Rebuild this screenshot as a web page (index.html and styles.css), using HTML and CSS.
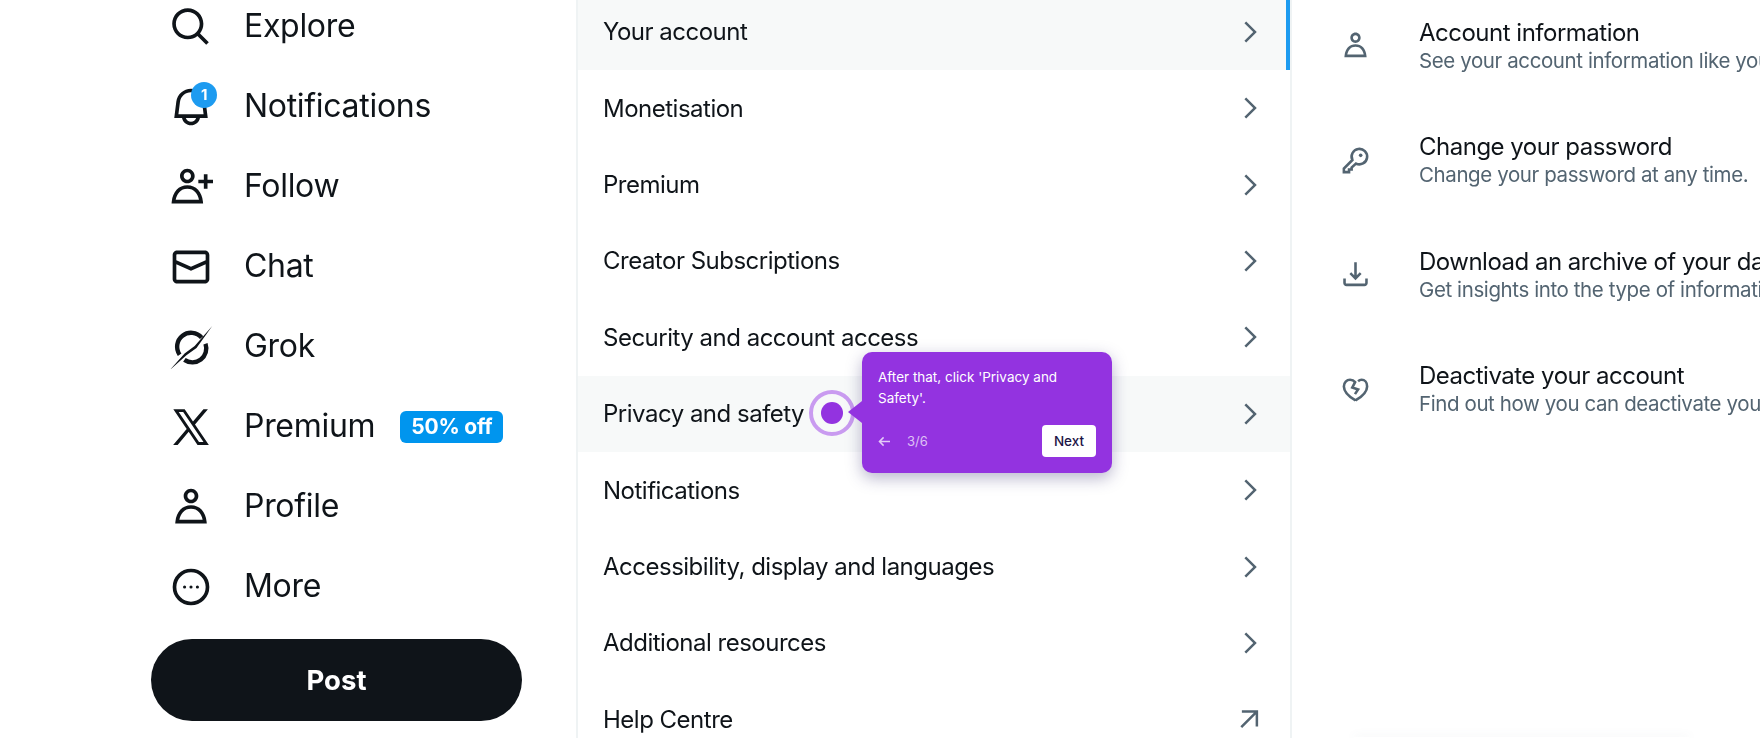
FILE: index.html
```html
<!DOCTYPE html>
<html lang="en">
<head>
  <meta charset="UTF-8">
  <title>Settings</title>
  <link rel="stylesheet" href="styles.css">
</head>
<body>
  <div class="page">
    <nav class="sidebar">
      <a class="nav-item">
        <svg class="nav-icon" viewBox="0 0 24 24"><path d="M10.25 3.75c-3.59 0-6.5 2.91-6.5 6.5s2.91 6.5 6.5 6.5c1.795 0 3.419-.726 4.596-1.904 1.178-1.177 1.904-2.801 1.904-4.596 0-3.59-2.91-6.5-6.5-6.5zm-8.5 6.5c0-4.694 3.806-8.5 8.5-8.5s8.5 3.806 8.5 8.5c0 1.986-.682 3.815-1.824 5.262l4.781 4.781-1.414 1.414-4.781-4.781c-1.447 1.142-3.276 1.824-5.262 1.824-4.694 0-8.5-3.806-8.5-8.5z"/></svg>
        <span class="nav-label">Explore</span>
      </a>
      <a class="nav-item">
        <span class="icon-wrap">
          <svg class="nav-icon" viewBox="0 0 24 24"><path d="M19.993 9.042C19.48 5.017 16.054 2 11.996 2s-7.49 3.021-7.999 7.051L2.866 18H7.1c.463 2.282 2.481 4 4.9 4s4.437-1.718 4.9-4h4.236l-1.143-8.958zM12 20c-1.306 0-2.417-.835-2.829-2h5.658c-.412 1.165-1.523 2-2.829 2zm-6.866-4l.847-6.698C6.364 6.272 8.941 4 11.996 4s5.627 2.268 6.013 5.295L18.864 16H5.134z"/></svg>
          <span class="count">1</span>
        </span>
        <span class="nav-label">Notifications</span>
      </a>
      <a class="nav-item">
        <svg class="nav-icon" viewBox="0 0 24 24"><path d="M10 4c-1.105 0-2 .9-2 2s.895 2 2 2 2-.9 2-2-.895-2-2-2zM6 6c0-2.21 1.791-4 4-4s4 1.79 4 4-1.791 4-4 4-4-1.79-4-4zm13 4v3h2v-3h3V8h-3V5h-2v3h-3v2h3zM3.651 19h12.698c-.337-1.8-1.023-3.21-1.945-4.19C13.318 13.65 11.838 13 10 13s-3.317.65-4.404 1.81c-.922.98-1.608 2.39-1.945 4.19zm.486-5.56C5.627 11.85 7.648 11 10 11s4.373.85 5.863 2.44c1.477 1.58 2.366 3.8 2.632 6.46l.11 1.1H1.395l.11-1.1c.266-2.66 1.155-4.88 2.632-6.46z"/></svg>
        <span class="nav-label">Follow</span>
      </a>
      <a class="nav-item">
        <svg class="nav-icon" viewBox="0 0 24 24"><path d="M1.998 5.5c0-1.381 1.119-2.5 2.5-2.5h15c1.381 0 2.5 1.119 2.5 2.5v13c0 1.381-1.119 2.5-2.5 2.5h-15c-1.381 0-2.5-1.119-2.5-2.5v-13zm2.5-.5c-.276 0-.5.224-.5.5v2.764l8 3.638 8-3.636V5.5c0-.276-.224-.5-.5-.5h-15zm15.5 5.463l-8 3.636-8-3.638V18.5c0 .276.224.5.5.5h15c.276 0 .5-.224.5-.5v-8.037z"/></svg>
        <span class="nav-label">Chat</span>
      </a>
      <a class="nav-item">
        <svg class="nav-icon" viewBox="0 0 24 24">
          <path class="line grok-ring" d="M5.8 16.2A7.6 7.6 0 0 1 17.8 6.9M19.9 10.2A7.6 7.6 0 0 1 8.4 19"/>
          <path d="M23.6.6 14 11.5 8.5 15.5.5 24.5 9.5 16.5 15 12.5z"/>
        </svg>
        <span class="nav-label">Grok</span>
      </a>
      <a class="nav-item">
        <svg class="nav-icon" viewBox="0 0 24 24"><path d="M21.742 21.75l-7.563-11.179 7.056-8.321h-2.456l-5.691 6.714-4.54-6.714H2.359l7.29 10.776L2.25 21.75h2.456l6.035-7.118 4.818 7.118h6.191-.008zM7.739 3.818L18.81 20.182h-2.447L5.29 3.818h2.447z"/></svg>
        <span class="nav-label">Premium</span>
        <span class="offer">50% off</span>
      </a>
      <a class="nav-item">
        <svg class="nav-icon" viewBox="0 0 24 24"><path d="M5.651 19h12.698c-.337-1.8-1.023-3.21-1.945-4.19C15.318 13.65 13.838 13 12 13s-3.317.65-4.404 1.81c-.922.98-1.608 2.39-1.945 4.19zm.486-5.56C7.627 11.85 9.648 11 12 11s4.373.85 5.863 2.44c1.477 1.58 2.366 3.8 2.632 6.46l.11 1.1H3.395l.11-1.1c.266-2.66 1.155-4.88 2.632-6.46zM12 4c-1.105 0-2 .9-2 2s.895 2 2 2 2-.9 2-2-.895-2-2-2zM8 6c0-2.21 1.791-4 4-4s4 1.79 4 4-1.791 4-4 4-4-1.79-4-4z"/></svg>
        <span class="nav-label">Profile</span>
      </a>
      <a class="nav-item">
        <svg class="nav-icon" viewBox="0 0 24 24">
          <circle class="line" cx="12" cy="12" r="9"/>
          <circle cx="8.5" cy="12" r=".85"/><circle cx="12" cy="12" r=".85"/><circle cx="15.5" cy="12" r=".85"/>
        </svg>
        <span class="nav-label">More</span>
      </a>
      <button class="post">Post</button>
    </nav>

    <section class="menu">
      <div class="menu-row current">
        <span>Your account</span>
        <svg class="chevron" viewBox="0 0 24 24"><path d="M14.586 12L7.543 4.96l1.414-1.42L17.414 12l-8.457 8.46-1.414-1.42L14.586 12z"/></svg>
      </div>
      <div class="menu-row">
        <span>Monetisation</span>
        <svg class="chevron" viewBox="0 0 24 24"><path d="M14.586 12L7.543 4.96l1.414-1.42L17.414 12l-8.457 8.46-1.414-1.42L14.586 12z"/></svg>
      </div>
      <div class="menu-row">
        <span>Premium</span>
        <svg class="chevron" viewBox="0 0 24 24"><path d="M14.586 12L7.543 4.96l1.414-1.42L17.414 12l-8.457 8.46-1.414-1.42L14.586 12z"/></svg>
      </div>
      <div class="menu-row">
        <span>Creator Subscriptions</span>
        <svg class="chevron" viewBox="0 0 24 24"><path d="M14.586 12L7.543 4.96l1.414-1.42L17.414 12l-8.457 8.46-1.414-1.42L14.586 12z"/></svg>
      </div>
      <div class="menu-row">
        <span>Security and account access</span>
        <svg class="chevron" viewBox="0 0 24 24"><path d="M14.586 12L7.543 4.96l1.414-1.42L17.414 12l-8.457 8.46-1.414-1.42L14.586 12z"/></svg>
      </div>
      <div class="menu-row hover">
        <span>Privacy and safety</span>
        <svg class="chevron" viewBox="0 0 24 24"><path d="M14.586 12L7.543 4.96l1.414-1.42L17.414 12l-8.457 8.46-1.414-1.42L14.586 12z"/></svg>
      </div>
      <div class="menu-row">
        <span>Notifications</span>
        <svg class="chevron" viewBox="0 0 24 24"><path d="M14.586 12L7.543 4.96l1.414-1.42L17.414 12l-8.457 8.46-1.414-1.42L14.586 12z"/></svg>
      </div>
      <div class="menu-row">
        <span>Accessibility, display and languages</span>
        <svg class="chevron" viewBox="0 0 24 24"><path d="M14.586 12L7.543 4.96l1.414-1.42L17.414 12l-8.457 8.46-1.414-1.42L14.586 12z"/></svg>
      </div>
      <div class="menu-row">
        <span>Additional resources</span>
        <svg class="chevron" viewBox="0 0 24 24"><path d="M14.586 12L7.543 4.96l1.414-1.42L17.414 12l-8.457 8.46-1.414-1.42L14.586 12z"/></svg>
      </div>
      <div class="menu-row">
        <span>Help Centre</span>
        <svg class="chevron" viewBox="0 0 24 24"><path d="M18.5 5H5.5v2h9.6L4.3 17.8l1.4 1.4L16.5 8.4V18h2z"/></svg>
      </div>
    </section>

    <section class="detail">
      <div class="detail-row">
        <svg class="detail-icon" viewBox="0 0 24 24"><path d="M5.651 19h12.698c-.337-1.8-1.023-3.21-1.945-4.19C15.318 13.65 13.838 13 12 13s-3.317.65-4.404 1.81c-.922.98-1.608 2.39-1.945 4.19zm.486-5.56C7.627 11.85 9.648 11 12 11s4.373.85 5.863 2.44c1.477 1.58 2.366 3.8 2.632 6.46l.11 1.1H3.395l.11-1.1c.266-2.66 1.155-4.88 2.632-6.46zM12 4c-1.105 0-2 .9-2 2s.895 2 2 2 2-.9 2-2-.895-2-2-2zM8 6c0-2.21 1.791-4 4-4s4 1.79 4 4-1.791 4-4 4-4-1.79-4-4z"/></svg>
        <div class="detail-text">
          <h3>Account information</h3>
          <p>See your account information like your phone number and email address.</p>
        </div>
      </div>
      <div class="detail-row">
        <svg class="detail-icon" viewBox="0 0 24 24">
          <path class="line" d="M9.6 11.6 3 18.2V21h4v-2h2v-1.6l3.4-3A6 6 0 1 0 9.6 11.6z"/>
          <circle cx="16" cy="8" r="1.4"/>
        </svg>
        <div class="detail-text">
          <h3>Change your password</h3>
          <p>Change your password at any time.</p>
        </div>
      </div>
      <div class="detail-row">
        <svg class="detail-icon" viewBox="0 0 24 24"><path d="M12 16.414l-4.707-4.707 1.414-1.414L11 12.586V2.5h2v10.086l2.293-2.293 1.414 1.414L12 16.414zM21.5 15l-.017 3.5c-.005 1.38-1.128 2.5-2.5 2.5H5c-1.38 0-2.5-1.12-2.5-2.5V15h2v3.5c0 .28.224.5.5.5h14c.277 0 .5-.22.5-.5l.017-3.5h2z"/></svg>
        <div class="detail-text">
          <h3>Download an archive of your data</h3>
          <p>Get insights into the type of information stored for your account.</p>
        </div>
      </div>
      <div class="detail-row">
        <svg class="detail-icon" viewBox="0 0 24 24"><path class="line" d="M12 20.5C7 17.5 3 14 3 9.6 3 6.6 5.2 4.5 7.8 4.5c1.6 0 3 .7 3.9 1.8L9.5 10.5l4.5 1.5-2.4 3.6M14 5.6c.8-.7 1.7-1.1 2.7-1.1 2.5 0 4.3 2.1 4.3 5.1 0 4.4-4 7.9-9 10.9"/></svg>
        <div class="detail-text">
          <h3>Deactivate your account</h3>
          <p>Find out how you can deactivate your account.</p>
        </div>
      </div>
    </section>
  </div>

  <div class="drawer"></div>

  <!-- walkthrough overlay -->
  <div class="spot"><div class="spot-dot"></div></div>
  <div class="tip">
    <p class="tip-text">After that, click 'Privacy and Safety'.</p>
    <div class="tip-foot">
      <div class="tip-step">
        <svg class="tip-back" viewBox="0 0 14 12"><path d="M13 6H2M6 1.5 1.5 6 6 10.5"/></svg>
        <span>3/6</span>
      </div>
      <button class="tip-next">Next</button>
    </div>
  </div>
</body>
</html>
```

FILE: styles.css
```css
html, body {
  margin: 0;
  padding: 0;
  height: 738px;
  overflow: hidden;
  background: #fff;
}

body {
  position: relative;
  font-family: Inter, "Liberation Sans", sans-serif;
  color: #0f1419;
}

.page {
  display: flex;
  height: 738px;
  overflow: hidden;
  filter: blur(0.35px);
}

/* left nav */
.sidebar {
  width: 576px;
  flex-shrink: 0;
  box-sizing: border-box;
  margin-top: -13px;
  padding-left: 151px;
}

.nav-item {
  display: flex;
  align-items: center;
  gap: 31px;
  height: 80px;
  padding-left: 18px;
  font-size: 32px;
  letter-spacing: -0.3px;
}

.nav-label {
  padding-bottom: 4px;
}

.nav-icon {
  display: block;
  width: 44px;
  height: 44px;
  flex-shrink: 0;
  fill: #0f1419;
}

.line {
  fill: none;
  stroke: currentColor;
  stroke-width: 2;
}

.grok-ring {
  stroke-width: 2.4;
}

.icon-wrap {
  position: relative;
  display: block;
}

.count {
  position: absolute;
  top: -3px;
  left: 22px;
  width: 26px;
  height: 26px;
  border-radius: 50%;
  background: #1d9bf0;
  color: #fff;
  font-size: 15px;
  font-weight: 700;
  line-height: 26px;
  text-align: center;
}

.offer {
  margin-left: -6px;
  padding: 0 11px;
  height: 32px;
  line-height: 32px;
  border-radius: 6px;
  background: #0095ee;
  color: #fff;
  font-size: 21px;
  font-weight: 700;
  letter-spacing: -0.2px;
}

.post {
  display: block;
  width: 371px;
  height: 82px;
  margin-top: 12px;
  border: none;
  border-radius: 41px;
  background: #0f1419;
  color: #fff;
  font-family: inherit;
  font-size: 27.5px;
  font-weight: 700;
}

/* settings list */
.menu {
  width: 716px;
  flex-shrink: 0;
  box-sizing: border-box;
  margin-top: -6.4px;
  border-left: 2px solid #eff3f4;
  border-right: 2px solid #eff3f4;
}

.menu-row {
  display: flex;
  align-items: center;
  justify-content: space-between;
  box-sizing: border-box;
  height: 76.4px;
  padding: 0 25px 0 25px;
  font-size: 24px;
  letter-spacing: -0.5px;
}

.menu-row.current {
  background: #f7f9f9;
  border-right: 4px solid #1d9bf0;
  padding-right: 21px;
}

.menu-row.hover {
  background: #f7f9f9;
}

.chevron {
  display: block;
  width: 30px;
  height: 30px;
  fill: #536471;
}

/* right pane */
.detail {
  flex: 1;
  min-width: 0;
  margin-top: -11.8px;
}

.detail-row {
  display: flex;
  align-items: center;
  gap: 48px;
  height: 114.6px;
  padding-left: 48px;
  white-space: nowrap;
}

.detail-icon {
  display: block;
  width: 31px;
  height: 31px;
  flex-shrink: 0;
  fill: #536471;
  color: #536471;
}

.detail-text h3 {
  margin: 0;
  font-size: 24px;
  font-weight: 400;
  line-height: 29px;
  letter-spacing: -0.5px;
}

.detail-text p {
  margin: 0;
  color: #536471;
  font-size: 20.5px;
  line-height: 27px;
  letter-spacing: -0.4px;
}

.drawer {
  position: absolute;
  left: 1354px;
  top: 737px;
  width: 335px;
  height: 1px;
  background: #fff;
  box-shadow: 0 0 8px rgba(101, 119, 134, 0.25);
}

/* walkthrough overlay */
.spot {
  position: absolute;
  left: 809px;
  top: 390px;
  width: 46px;
  height: 46px;
  box-sizing: border-box;
  display: flex;
  align-items: center;
  justify-content: center;
  border: 4px solid #c99bf0;
  border-radius: 50%;
}

.spot-dot {
  width: 22px;
  height: 22px;
  border-radius: 50%;
  background: #9333e0;
}

.tip {
  position: absolute;
  left: 862px;
  top: 352px;
  width: 250px;
  height: 121px;
  box-sizing: border-box;
  padding: 15px 16px 16px;
  display: flex;
  flex-direction: column;
  justify-content: space-between;
  border-radius: 10px;
  background: #9333e0;
  box-shadow: 0 5px 16px rgba(50, 40, 110, 0.35);
  color: #fff;
}

.tip::before {
  content: "";
  position: absolute;
  left: -14px;
  top: 49px;
  border-top: 11px solid transparent;
  border-bottom: 11px solid transparent;
  border-right: 14px solid #9333e0;
}

.tip-text {
  margin: 0;
  font-size: 13.5px;
  line-height: 21px;
}

.tip-foot {
  display: flex;
  align-items: center;
  justify-content: space-between;
}

.tip-step {
  display: flex;
  align-items: center;
  gap: 16px;
  font-size: 13px;
  color: rgba(255, 255, 255, 0.7);
}

.tip-back {
  width: 13px;
  height: 11px;
  fill: none;
  stroke: rgba(255, 255, 255, 0.75);
  stroke-width: 1.6;
}

.tip-next {
  width: 54px;
  height: 32px;
  border: none;
  border-radius: 4px;
  background: #fff;
  color: #1c1446;
  font-family: inherit;
  font-size: 13.5px;
  font-weight: 500;
}
```
